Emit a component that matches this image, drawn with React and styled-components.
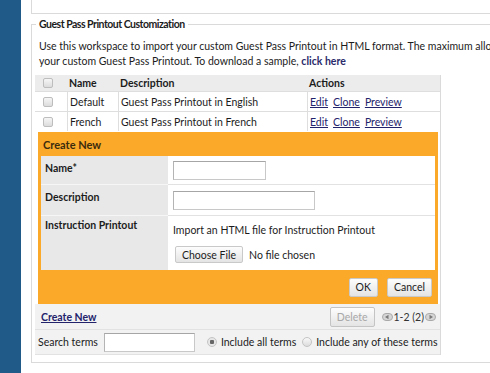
import React from 'react';
import styled, { createGlobalStyle } from 'styled-components';

const GlobalStyle = createGlobalStyle`
  html, body {
    margin: 0;
    padding: 0;
    background: #fff;
  }
  body {
    font-family: Lato, "Liberation Sans", sans-serif;
    font-size: 10.5px;
    color: #1c1c1c;
  }
`;

const Page = styled.div`
  display: flex;
  width: 490px;
  height: 373px;
  overflow: hidden;
`;

const Sidebar = styled.div`
  flex: none;
  width: 21px;
  background: #1f5a88;
`;

const Main = styled.div`
  flex: 1;
  min-width: 0;
  padding-left: 10px;
  overflow: hidden;
`;

const TopBox = styled.div`
  width: 620px;
  height: 13px;
  border-left: 1px solid #dadada;
  border-bottom: 1px solid #dadada;
`;

const Fieldset = styled.fieldset`
  width: 620px;
  min-width: 0;
  margin: 3px 0 0;
  padding: 0 0 7px 3px;
  border: 1px solid #dadada;
`;

const Legend = styled.legend`
  margin-left: 1px;
  padding: 0 3px;
  font-size: 10.5px;
  letter-spacing: -0.5px;
  line-height: 14px;
  font-weight: bold;
  color: #1c1c1c;
`;

const Intro = styled.p`
  margin: 8px 0 6px;
  padding-left: 4px;
  line-height: 15px;
  white-space: nowrap;
`;

const Strong = styled.a`
  font-weight: bold;
  color: #2a2a6a;
  text-decoration: none;
`;

const ListBox = styled.div`
  width: 405px;
  border-right: 1px solid #dadada;
`;

const Row = styled.div`
  display: grid;
  grid-template-columns: 32px 51px 189px 133px;
  height: ${p => (p.$head ? '16px' : '19px')};
  background: ${p => (p.$head ? '#ececec' : '#fff')};
  border-top: ${p => (p.$head ? 'none' : '1px solid #dedede')};
  font-weight: ${p => (p.$head ? 'bold' : 'normal')};
`;

const Cell = styled.div`
  display: flex;
  align-items: center;
  gap: 5px;
  padding-left: 2px;
  border-left: ${p => (p.$line ? '1px solid #dedede' : 'none')};
  white-space: nowrap;
`;

const CheckCell = styled.div`
  display: flex;
  align-items: center;
  padding-left: 8px;
`;

const Checkbox = styled.span`
  width: 8px;
  height: 8px;
  border: 1px solid #bdbdbd;
  border-radius: 2px;
  background: linear-gradient(#f6f6f6, #dcdcdc);
`;

const Link = styled.a`
  color: #23236b;
  text-decoration: underline;
  font-weight: ${p => (p.$bold ? 'bold' : 'normal')};
`;

const Panel = styled.div`
  margin: 0 2px 0 3px;
  border-top: 1px solid #fff;
  background: #faa928;
  padding: 0 3px;
`;

const PanelTitle = styled.div`
  height: 24px;
  display: flex;
  align-items: center;
  padding-left: 2px;
  font-size: 11px;
  font-weight: bold;
  color: #3c2c0e;
`;

const PanelBody = styled.div`
  display: grid;
  grid-template-columns: 127px 1fr;
  background: #fff;
`;

const Label = styled.div`
  background: #e8e8e8;
  padding: ${p => p.$pt || 5}px 0 0 4px;
  height: ${p => p.$h}px;
  border-bottom: ${p => (p.$last ? 'none' : '1px solid #f6f6f6')};
  font-weight: bold;
  line-height: 14px;
`;

const Field = styled.div`
  height: ${p => p.$h}px;
  padding-left: 5px;
  border-bottom: ${p => (p.$last ? 'none' : '1px solid #e2e2e2')};
  display: flex;
  flex-direction: column;
  justify-content: ${p => (p.$top ? 'flex-start' : 'center')};
`;

const TextInput = styled.input`
  box-sizing: border-box;
  width: ${p => p.$w}px;
  height: 19px;
  margin: 0;
  padding: 1px 3px;
  border: 1px solid #c8c8c8;
  border-top-color: #a6a6a6;
  border-left-color: #b4b4b4;
  background: #fff;
  font: inherit;
  outline: none;
`;

const HelpText = styled.div`
  margin-top: 7px;
  line-height: 14px;
`;

const FileRow = styled.div`
  display: flex;
  align-items: center;
  gap: 6px;
  margin-top: 9px;
  padding-left: 2px;
`;

const Button = styled.button`
  box-sizing: border-box;
  height: ${p => p.$h || 19}px;
  margin: 0;
  padding: 0 ${p => p.$px || 6}px;
  border: 1px solid ${p => (p.disabled ? '#c4c4c4' : '#c9c9c9')};
  border-radius: 2px;
  background: linear-gradient(#fdfdfd, #e4e4e4);
  font: inherit;
  color: ${p => (p.disabled ? '#a8a8a8' : '#1c1c1c')};
  cursor: default;
`;

const PanelFoot = styled.div`
  height: 34px;
  display: flex;
  align-items: center;
  justify-content: flex-end;
  gap: 9px;
  padding-right: 3px;
`;

const Toolbar = styled.div`
  height: 25px;
  display: flex;
  align-items: center;
  justify-content: space-between;
  padding: 0 4px 0 6px;
  background: #f2f2f2;
`;

const Pager = styled.div`
  display: flex;
  align-items: center;
  gap: 1px;
  color: #333;
`;

const ToolRight = styled.div`
  display: flex;
  align-items: center;
  gap: 7px;
`;

const SearchBar = styled.div`
  height: 24px;
  display: flex;
  align-items: center;
  padding-left: 3px;
  background: #f2f2f2;
  border-top: 1px solid #e2e2e2;
  border-bottom: 1px solid #e2e2e2;
  white-space: nowrap;
`;

const SearchInput = styled(TextInput)`
  margin: 0 12px 0 6px;
  height: 19px;
`;

const Radio = styled.span`
  box-sizing: border-box;
  width: 10px;
  height: 10px;
  margin-right: 4px;
  border-radius: 50%;
  border: 1px solid #c4c4c4;
  background: ${p =>
    p.$on
      ? 'radial-gradient(circle, #666 0 2px, #e6e6e6 2.5px)'
      : 'linear-gradient(#f8f8f8, #dcdcdc)'};
`;

const RadioGroup = styled.label`
  display: flex;
  align-items: center;
  margin-right: 6px;
`;

const PagerArrow = ({ dir }) => (
  <svg width="11" height="8" viewBox="0 0 11 8">
    <rect x="0.5" y="0.5" width="10" height="7" rx="3.5" fill="#d6d6d6" stroke="#a9a9a9" />
    {dir === 'left' ? (
      <path d="M3 4 L6.5 1.8 L6.5 6.2 Z" fill="#7a7a7a" />
    ) : (
      <path d="M8 4 L4.5 1.8 L4.5 6.2 Z" fill="#7a7a7a" />
    )}
  </svg>
);

const rows = [
  { name: 'Default', desc: 'Guest Pass Printout in English' },
  { name: 'French', desc: 'Guest Pass Printout in French' },
];

export default function App() {
  return (
    <>
      <GlobalStyle />
      <Page>
        <Sidebar />
        <Main>
          <TopBox />
          <Fieldset>
            <Legend>Guest Pass Printout Customization</Legend>
            <Intro>
              Use this workspace to import your custom Guest Pass Printout in HTML format. The maximum allowed file size is 20KB. Please customize
              <br />
              your custom Guest Pass Printout. To download a sample, <Strong>click here</Strong>
            </Intro>
            <ListBox>
              <Row $head>
                <CheckCell><Checkbox /></CheckCell>
                <Cell>Name</Cell>
                <Cell>Description</Cell>
                <Cell>Actions</Cell>
              </Row>
              {rows.map(r => (
                <Row key={r.name}>
                  <CheckCell><Checkbox /></CheckCell>
                  <Cell $line>{r.name}</Cell>
                  <Cell $line>{r.desc}</Cell>
                  <Cell $line>
                    <Link>Edit</Link>
                    <Link>Clone</Link>
                    <Link>Preview</Link>
                  </Cell>
                </Row>
              ))}
              <Panel>
                <PanelTitle>Create New</PanelTitle>
                <PanelBody>
                  <Label $h={23}>Name*</Label>
                  <Field $h={28}>
                    <TextInput $w={93} />
                  </Field>
                  <Label $h={25}>Description</Label>
                  <Field $h={30}>
                    <TextInput $w={142} />
                  </Field>
                  <Label $h={52} $pt={2} $last>Instruction Printout</Label>
                  <Field $h={54} $top $last>
                    <HelpText>Import an HTML file for Instruction Printout</HelpText>
                    <FileRow>
                      <Button $h={17} $px={6}>Choose File</Button>
                      <span>No file chosen</span>
                    </FileRow>
                  </Field>
                </PanelBody>
                <PanelFoot>
                  <Button>OK</Button>
                  <Button>Cancel</Button>
                </PanelFoot>
              </Panel>
              <Toolbar>
                <Link $bold>Create New</Link>
                <ToolRight>
                  <Button $h={20} disabled>Delete</Button>
                  <Pager>
                    <PagerArrow dir="left" />
                    <span>1-2 (2)</span>
                    <PagerArrow dir="right" />
                  </Pager>
                </ToolRight>
              </Toolbar>
              <SearchBar>
                <span>Search terms</span>
                <SearchInput $w={91} />
                <RadioGroup>
                  <Radio $on />
                  Include all terms
                </RadioGroup>
                <RadioGroup>
                  <Radio />
                  Include any of these terms
                </RadioGroup>
              </SearchBar>
            </ListBox>
          </Fieldset>
        </Main>
      </Page>
    </>
  );
}
